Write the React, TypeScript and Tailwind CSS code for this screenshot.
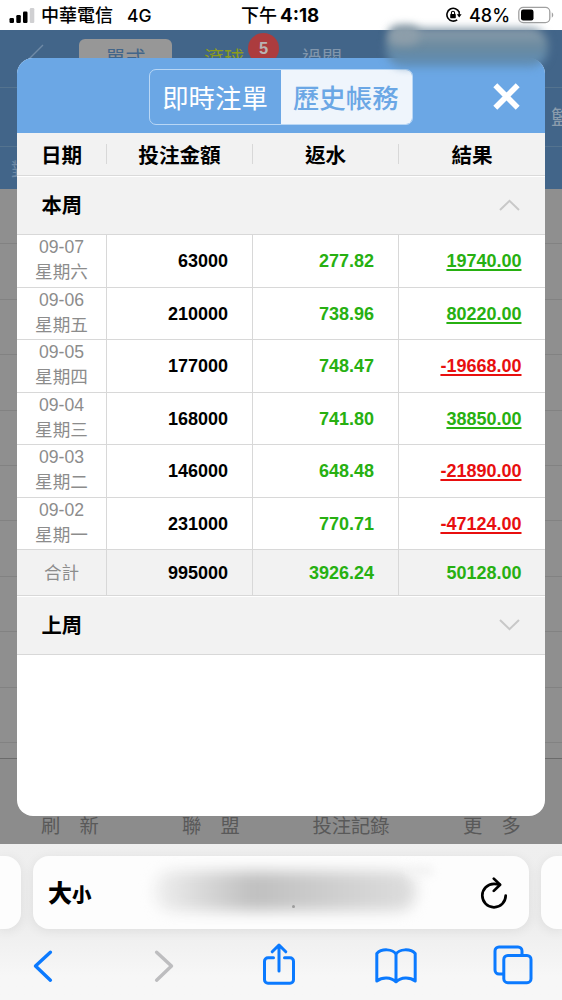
import React from "react";

type Row = { date: string; day: string; amount: string; rebate: string; result: string };

const rows: Row[] = [
  { date: "09-07", day: "星期六", amount: "63000", rebate: "277.82", result: "19740.00" },
  { date: "09-06", day: "星期五", amount: "210000", rebate: "738.96", result: "80220.00" },
  { date: "09-05", day: "星期四", amount: "177000", rebate: "748.47", result: "-19668.00" },
  { date: "09-04", day: "星期三", amount: "168000", rebate: "741.80", result: "38850.00" },
  { date: "09-03", day: "星期二", amount: "146000", rebate: "648.48", result: "-21890.00" },
  { date: "09-02", day: "星期一", amount: "231000", rebate: "770.71", result: "-47124.00" },
];

const columns = "grid grid-cols-[89px_146px_146px_147px]";

function StatusBar() {
  return (
    <header className="flex h-[30px] shrink-0 items-center bg-white text-black font-['Inter','Noto_Sans_CJK_TC',sans-serif]">
      <div className="flex w-[241px] items-center pl-[9px]">
        <svg width="26" height="17" viewBox="0 0 26 17">
          <rect x="0.5" y="11" width="4.5" height="5" rx="1.2" />
          <rect x="7.3" y="8" width="4.5" height="8" rx="1.2" />
          <rect x="14" y="4.5" width="4.5" height="11.5" rx="1.2" />
          <rect x="20.8" y="1" width="4.5" height="15" rx="1.2" fill="#d0d0d2" />
        </svg>
        <span className="ml-[6px] pt-[2px] text-[18px] leading-[30px] font-medium">中華電信</span>
        <span className="ml-[14px] pt-px text-[17.5px] leading-[30px] font-medium">4G</span>
      </div>
      <div className="flex w-[204px] items-center pt-px text-[18px] leading-[30px] font-medium">
        <span className="pt-px">下午</span>
        <span className="ml-[3px] text-[18.8px] font-bold">4:18</span>
      </div>
      <svg width="17" height="16" viewBox="0 0 17 16" fill="none" stroke="#000">
        <path d="M14.2 5.2A6.4 6.4 0 1 0 12.2 12.8" strokeWidth="1.6" />
        <path d="M14.2 4.5V9" strokeWidth="1.4" />
        <path d="M11.8 7.3h4.8L14.2 10.4z" fill="#000" stroke="none" />
        <rect x="5.2" y="7" width="5.6" height="4.2" rx="0.7" fill="#000" stroke="none" />
        <path d="M6.4 7.2V5.9a1.6 1.6 0 0 1 3.2 0v1.3" strokeWidth="1.1" />
      </svg>
      <span className="ml-[7px] w-[42px] pt-px text-[18px] leading-[30px] font-medium whitespace-nowrap">48%</span>
      <svg className="ml-[7px]" width="36" height="18" viewBox="0 0 36 18">
        <rect x="0.8" y="1.3" width="31" height="15.4" rx="4.4" fill="none" stroke="#a0a0a0" strokeWidth="1.3" />
        <rect x="3" y="3.5" width="12.5" height="11" rx="2.2" />
        <path d="M33.8 6.3v5.4a3.2 3.2 0 0 0 0-5.4z" fill="#a0a0a0" />
      </svg>
    </header>
  );
}

function DimmedPage() {
  return (
    <div className="flex h-full flex-col bg-[#8f8f8f] text-[20px]">
      <div className="flex h-[57px] items-start bg-[#426589]">
        <svg className="mt-[14px] ml-[25px]" width="20" height="34" viewBox="0 0 20 34" fill="none" stroke="#6f8aa6" strokeWidth="1.4">
          <path d="M18 1L2 17l16 16" />
        </svg>
        <div className="mt-[9px] ml-[34px] h-[38px] w-[93px] rounded-[6px] bg-[#979797] text-center leading-[38px] text-[#426589]">單式</div>
        <div className="mt-[9px] ml-[32px] leading-[38px] text-[#8c9b1c]">滾球</div>
        <div className="mt-[3px] ml-[4px] flex h-[31px] w-[31px] items-center justify-center rounded-full bg-[#ac3c3e] text-[16.5px] font-bold text-[#b9b3b3] font-['Liberation_Sans',sans-serif]">5</div>
        <div className="mt-[9px] ml-[23px] leading-[38px] text-[#8196ac]">過關</div>
      </div>
      <div className="flex h-[59px] items-center justify-end overflow-hidden border-t border-[#54738f] bg-[#426589]">
        <span className="-mr-[9px] text-[20px] text-[#8c9dad]">籃</span>
      </div>
      <div className="flex h-[43px] items-center border-t border-[#54738f] bg-[#426589]">
        <span className="ml-[11px] text-[18px] text-[#6f8aa6]">對</span>
      </div>
      {[0, 1, 2, 3, 4, 5, 6, 7, 8, 9].map((n) => (
        <div key={n} className="h-[55.4px] shrink-0 border-b border-[#828282]" />
      ))}
      <div className="mt-[15px] flex flex-1 items-end border-t border-[#6b6b6b] bg-[#8c8c8c] pb-[7px] pl-[41px] text-[19.3px] leading-[24px] text-[#595959]">
        <span className="w-[141px] tracking-[19.3px]">刷新</span>
        <span className="w-[130.5px] tracking-[19.3px]">聯盟</span>
        <span className="w-[150.5px]">投注記錄</span>
        <span className="tracking-[19.3px]">更多</span>
      </div>
    </div>
  );
}

function Section({ title, open }: { title: string; open: boolean }) {
  return (
    <div className="flex h-[57px] shrink-0 items-center justify-between bg-[#f2f2f2] pr-[25.5px] pb-[2px] pl-[24.5px]">
      <span className="text-[20.3px] font-bold">{title}</span>
      <svg width="21" height="12" viewBox="0 0 21 12" fill="none" stroke="#c8c8c8" strokeWidth="2">
        <path d={open ? "M1 11l9.5-9.2L20 11" : "M1 1l9.5 9.2L20 1"} />
      </svg>
    </div>
  );
}

function BillDialog() {
  return (
    <section className="flex h-full flex-col overflow-hidden rounded-[16px] bg-white text-black">
      <div className="flex h-[75px] shrink-0 items-start bg-[#6ba7e5] pt-[11px]">
        <div className="ml-[132px] flex h-[55.5px] w-[263.5px] overflow-hidden rounded-[7px] border border-[#b9d7f5] text-[26.4px]">
          <button className="flex w-[131px] items-center justify-center pr-px whitespace-nowrap text-white">即時注單</button>
          <button className="flex flex-1 items-center justify-center bg-[#eff5fc] pr-px font-medium whitespace-nowrap text-[#6ba7e5]">歷史帳務</button>
        </div>
        <svg className="mt-[13.5px] ml-[80.5px]" width="27" height="27" viewBox="0 0 27 27" stroke="#fff" strokeWidth="5.6">
          <path d="M2.3 2.3l22.4 22.4M24.7 2.3L2.3 24.7" />
        </svg>
      </div>
      <div className={`${columns} h-[43px] shrink-0 items-center border-b border-[#dadada] bg-[#f2f2f2] text-center text-[20.6px] font-bold`}>
        <span className="leading-[20px]">日期</span>
        <span className="border-l border-[#d8d8d8] leading-[20px]">投注金額</span>
        <span className="border-l border-[#d8d8d8] leading-[20px]">返水</span>
        <span className="border-l border-[#d8d8d8] leading-[20px]">結果</span>
      </div>
      <div className="h-px shrink-0 bg-white" />
      <Section title="本周" open />
      <div className="font-['Liberation_Sans','Noto_Sans_CJK_TC',sans-serif] text-[18px] font-bold">
        {rows.map((r) => (
          <div key={r.date} className={`${columns} h-[52.5px] border-t border-[#d8d8d8] text-right`}>
            <div className="flex flex-col items-center text-[17.6px] leading-[25px] font-normal text-[#8c8c8c]">
              <span>{r.date}</span>
              <span>{r.day}</span>
            </div>
            <div className="border-l border-[#d8d8d8] pr-[24px] leading-[52px]">{r.amount}</div>
            <div className="border-l border-[#d8d8d8] pr-[24px] leading-[52px] text-[#27b011]">{r.rebate}</div>
            <div className="border-l border-[#d8d8d8] pr-[23.5px] leading-[52px]">
              <span className={`underline decoration-[1.5px] underline-offset-[2px] ${r.result.startsWith("-") ? "text-[#e80f0f]" : "text-[#27b011]"}`}>{r.result}</span>
            </div>
          </div>
        ))}
        <div className={`${columns} h-[47px] border-y border-[#d8d8d8] bg-[#f2f2f2] text-right leading-[46px]`}>
          <div className="text-center text-[17.6px] font-normal text-[#8c8c8c]">合計</div>
          <div className="border-l border-[#d8d8d8] pr-[24px]">995000</div>
          <div className="border-l border-[#d8d8d8] pr-[24px] text-[#27b011]">3926.24</div>
          <div className="border-l border-[#d8d8d8] pr-[23.5px] text-[#27b011]">50128.00</div>
        </div>
      </div>
      <div className="h-px shrink-0 bg-white" />
      <Section title="上周" open={false} />
      <div className="h-px shrink-0 bg-[#d8d8d8]" />
    </section>
  );
}

function BrowserBar() {
  return (
    <footer className="flex h-[156px] shrink-0 flex-col bg-linear-to-b from-[#efefef] via-[#ededed] to-[#f7f7f7] to-85%">
      <div className="mt-[12px] flex h-[73px] justify-between">
        <div className="w-[21px] rounded-r-[16px] bg-[#fdfdfd] shadow-[0_2px_12px_rgba(0,0,0,0.07)]" />
        <div className="relative flex w-[496px] items-center justify-between rounded-[16px] bg-[#fdfdfd] pr-[21px] pl-[15px] shadow-[0_2px_12px_rgba(0,0,0,0.07)]">
          <div className="flex items-baseline font-black">
            <span className="text-[24px] leading-[30px]">大</span>
            <span className="text-[19.5px] leading-[30px]">小</span>
          </div>
          <div className="absolute top-[15px] left-[121px] h-[40px] w-[262px] rounded-[18px] bg-linear-to-r from-[#f0f0f0] via-[#c0c0c0] via-38% to-[#dedede] blur-[7px]" />
          <div className="absolute top-[10px] left-[374px] h-[10px] w-[26px] rounded-full bg-[#f2f2f2] blur-[4px]" />
          <div className="absolute top-[49px] left-[259px] h-[3px] w-[3px] rounded-full bg-[#9c9c9c] blur-[0.5px]" />
          <svg width="28" height="32" viewBox="0 0 28 32" fill="none" stroke="#000" strokeWidth="2.7" strokeLinecap="round" strokeLinejoin="round">
            <path d="M25.7 18.6A11.7 11.7 0 1 1 14 6.9c2 0 3.8.2 5.5.7" />
            <path d="M13.8 1.6l6.3 6.1-6.3 6.2" />
          </svg>
        </div>
        <div className="w-[21px] rounded-l-[16px] bg-[#fdfdfd] shadow-[0_2px_12px_rgba(0,0,0,0.07)]" />
      </div>
      <nav className="flex h-[71px] items-center pt-[2px] pl-[33px] text-[#0b7aff]">
        <svg width="20" height="34" viewBox="0 0 20 34" fill="none" stroke="currentColor" strokeWidth="3.4" strokeLinecap="round" strokeLinejoin="round">
          <path d="M17.4 3.2L2.5 17l14.9 14.2" />
        </svg>
        <svg className="ml-[101px]" width="20" height="34" viewBox="0 0 20 34" fill="none" stroke="#bdbdbf" strokeWidth="3.4" strokeLinecap="round" strokeLinejoin="round">
          <path d="M2.6 3.2L17.5 17 2.6 31.2" />
        </svg>
        <svg className="-mt-[3px] ml-[88px]" width="34" height="44" viewBox="0 0 34 44" fill="none" stroke="currentColor" strokeWidth="3" strokeLinecap="round" strokeLinejoin="round">
          <path d="M11.5 15.8H6a3.5 3.5 0 0 0-3.5 3.5v18.5A3.5 3.5 0 0 0 6 41.3h22a3.5 3.5 0 0 0 3.5-3.5V19.3a3.5 3.5 0 0 0-3.5-3.5h-5.5" />
          <path d="M17 29V3.5M10.2 9.8L17 3l6.8 6.8" />
        </svg>
        <svg className="ml-[79px]" width="42" height="36" viewBox="0 0 42 36" fill="none" stroke="currentColor" strokeWidth="3" strokeLinejoin="round">
          <path d="M21 6.2C17.8.8 6.7.3 1.8 5.5V33c5.6-4.2 14-4 19.2.8C26.2 29 34.6 28.8 40.2 33V5.5C35.3.3 24.2.8 21 6.2zV33.8" />
        </svg>
        <svg className="-mt-px ml-[76px]" width="40" height="40" viewBox="0 0 40 40" fill="none" stroke="currentColor" strokeWidth="3">
          <rect x="10.8" y="10.5" width="27.2" height="27.2" rx="4" />
          <path d="M10.8 29H6a4 4 0 0 1-4-4V6a4 4 0 0 1 4-4h19a4 4 0 0 1 4 4v4.5" />
        </svg>
      </nav>
    </footer>
  );
}

export default function App() {
  return (
    <div className="relative flex h-[1000px] w-[562px] flex-col overflow-hidden font-['Noto_Sans_CJK_TC',sans-serif]">
      <StatusBar />
      <main className="relative h-[814px] shrink-0">
        <DimmedPage />
        <div className="absolute top-[28px] left-[17px] h-[757.5px] w-[528px]">
          <BillDialog />
        </div>
      </main>
      <BrowserBar />
      <div className="absolute top-[28px] left-[386px] h-[39px] w-[162px] rounded-[18px] bg-linear-to-b from-[#8f9fac] via-[#69899f] to-[#5e8fbb] blur-[4px]" />
      <div className="absolute top-[25px] left-[388px] h-[20px] w-[32px] rounded-full bg-[#8d9eaa] blur-[4px]" />
    </div>
  );
}
